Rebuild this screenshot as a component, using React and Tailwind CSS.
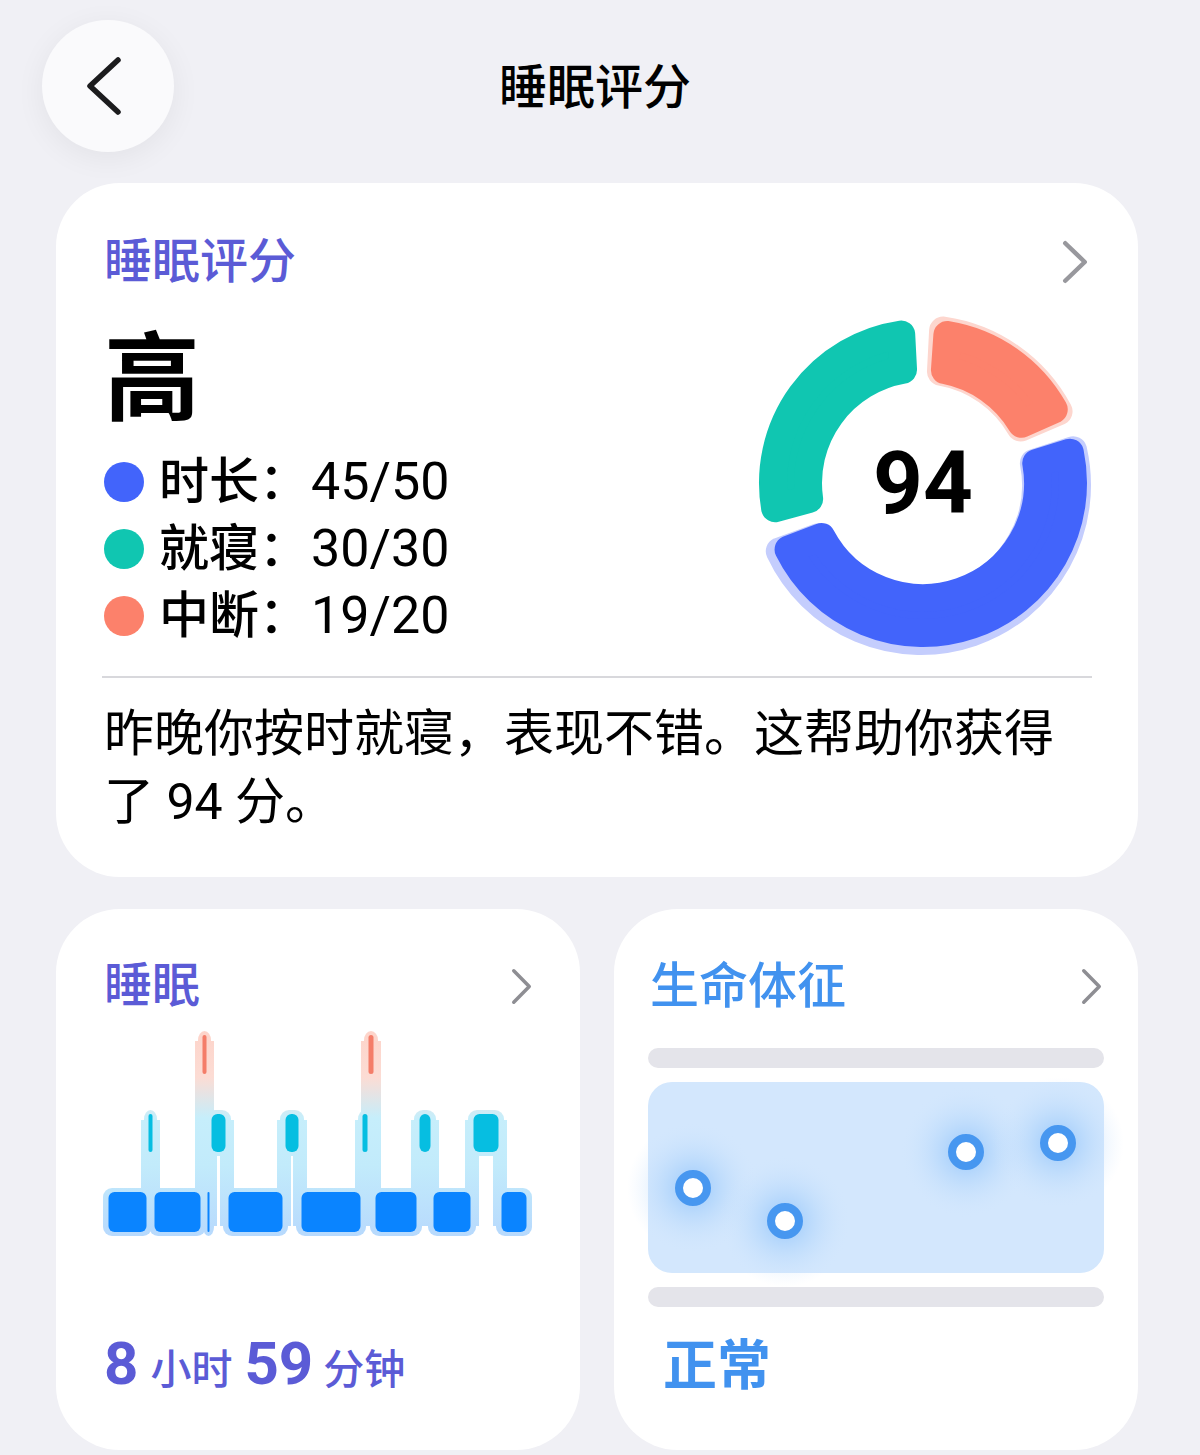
import React from "react";

const FONT = "font-['Roboto','Noto_Sans_CJK_SC',sans-serif]";

// ring segments, angles clockwise from 12 o'clock
const ring = [
  { a0: 255, a1: 357, color: "#10c6b1" },
  { a0: 4, a1: 66, color: "#fc816b", halo: "#fdd6ce" },
  { a0: 73, a1: 249, color: "#4264fb", halo: "#c4cdfd" },
];

function sector(cx, cy, a0, a1, ri, ro, r) {
  const rad = (a) => ((a - 90) * Math.PI) / 180;
  const pt = (a, R) => [cx + R * Math.cos(rad(a)), cy + R * Math.sin(rad(a))];
  const ro2 = ro - r;
  const ri2 = ri + r;
  const dOut = (Math.asin(r / ro2) * 180) / Math.PI;
  const dIn = (Math.asin(r / ri2) * 180) / Math.PI;
  const [x1, y1] = pt(a0 + dOut, ro2);
  const [x2, y2] = pt(a1 - dOut, ro2);
  const [x3, y3] = pt(a1 - dIn, ri2);
  const [x4, y4] = pt(a0 + dIn, ri2);
  const bigOut = a1 - a0 - 2 * dOut > 180 ? 1 : 0;
  const bigIn = a1 - a0 - 2 * dIn > 180 ? 1 : 0;
  return `M${x1} ${y1} A${ro2} ${ro2} 0 ${bigOut} 1 ${x2} ${y2} L${x3} ${y3} A${ri2} ${ri2} 0 ${bigIn} 0 ${x4} ${y4}Z`;
}

function ScoreRing() {
  return (
    <div className="relative w-[340px] h-[340px] -mt-[18px] -mr-[3px] shrink-0">
      <svg width="340" height="340" viewBox="0 0 340 340" className="overflow-visible">
        {ring.map((s, i) =>
          s.halo ? (
            <path
              key={"h" + i}
              d={sector(168, 172, s.a0 - 1, s.a1 + 1, 101, 170, 14)}
              fill={s.halo}
              stroke={s.halo}
              strokeWidth="28"
              strokeLinejoin="round"
            />
          ) : null
        )}
        {ring.map((s, i) => (
          <path
            key={i}
            d={sector(170, 170, s.a0, s.a1, 101, 164, 14)}
            fill={s.color}
            stroke={s.color}
            strokeWidth="28"
            strokeLinejoin="round"
          />
        ))}
      </svg>
      <div className="absolute inset-0 flex items-center justify-center">
        <span className="text-[87px] font-bold leading-none text-black">94</span>
      </div>
    </div>
  );
}

function Chevron({ w, h, color = "#8e8e93", stroke = 4 }) {
  return (
    <svg width={w} height={h} viewBox={`0 0 ${w} ${h}`} fill="none">
      <path
        d={`M${stroke / 2 + 1} ${stroke / 2 + 1} L${w - stroke / 2 - 1} ${h / 2} L${stroke / 2 + 1} ${h - stroke / 2 - 1}`}
        stroke={color}
        strokeWidth={stroke}
        strokeLinecap="round"
        strokeLinejoin="round"
      />
    </svg>
  );
}

// hypnogram: [stage, x0, x1]
const stages = [
  ["deep", 3, 44],
  ["light", 44, 49],
  ["deep", 49, 98],
  ["awake", 98, 103],
  ["deep", 103, 106],
  ["light", 106, 123],
  ["deep", 123, 180],
  ["light", 180, 196],
  ["deep", 196, 258],
  ["light", 258, 264],
  ["awake", 264, 270],
  ["deep", 270, 314],
  ["light", 314, 328],
  ["deep", 328, 368],
  ["light", 368, 396],
  ["deep", 396, 424],
];

const levels = {
  awake: { top: 3, bottom: 42, color: "#f47d69" },
  light: { top: 82, bottom: 120, color: "#06bee1" },
  deep: { top: 160, bottom: 200, color: "#0a84ff" },
};

function SleepChart() {
  const connectors = [];
  for (let i = 1; i < stages.length; i++) {
    const a = levels[stages[i - 1][0]];
    const b = levels[stages[i][0]];
    const x = stages[i][1];
    const top = Math.min(a.top, b.top) + 6;
    const bottom = Math.max(a.bottom, b.bottom) - 6;
    connectors.push({ x, top, bottom });
  }
  return (
    <svg width="428" height="205" viewBox="0 0 428 205" className="overflow-visible">
      <defs>
        <linearGradient id="halo" gradientUnits="userSpaceOnUse" x1="0" y1="0" x2="0" y2="205">
          <stop offset="0" stopColor="#fdd4ca" />
          <stop offset="0.22" stopColor="#fcdcd4" />
          <stop offset="0.42" stopColor="#c6eefb" />
          <stop offset="0.65" stopColor="#c2ebfb" />
          <stop offset="1" stopColor="#b7d9fd" />
        </linearGradient>
      </defs>
      {connectors.map((c, i) => (
        <rect key={"c" + i} x={c.x - 7} y={c.top} width="14" height={c.bottom - c.top} fill="url(#halo)" />
      ))}
      {stages.map(([s, x0, x1], i) => {
        const l = levels[s];
        return (
          <rect
            key={"h" + i}
            x={x0 - 4}
            y={l.top - 4}
            width={x1 - x0 + 8}
            height={l.bottom - l.top + 8}
            rx="9"
            fill="url(#halo)"
          />
        );
      })}
      {stages.map(([s, x0, x1], i) => {
        const l = levels[s];
        const w = x1 - x0;
        const inset = w > 8 ? 1.5 : 0.5;
        return (
          <rect
            key={i}
            x={x0 + inset}
            y={l.top}
            width={w - inset * 2}
            height={l.bottom - l.top}
            rx={w > 8 ? 6 : (w - inset * 2) / 2}
            fill={l.color}
          />
        );
      })}
    </svg>
  );
}

const points = [
  [45, 106],
  [137, 139],
  [318, 70],
  [410, 61],
];

function VitalsChart() {
  return (
    <div className="h-[191px] rounded-[24px] bg-[#d3e7fd]">
      <svg width="456" height="191" viewBox="0 0 456 191" className="overflow-visible">
        <defs>
          <radialGradient id="glow">
            <stop offset="0" stopColor="#8ec2fb" stopOpacity="0.9" />
            <stop offset="0.45" stopColor="#a9d1fb" stopOpacity="0.45" />
            <stop offset="1" stopColor="#d3e7fd" stopOpacity="0" />
          </radialGradient>
        </defs>
        {points.map(([x, y], i) => (
          <circle key={"g" + i} cx={x} cy={y} r="66" fill="url(#glow)" />
        ))}
        {points.map(([x, y], i) => (
          <circle key={i} cx={x} cy={y} r="14" fill="#ffffff" stroke="#4797f0" strokeWidth="8" />
        ))}
      </svg>
    </div>
  );
}

const legend = [
  { color: "#4264fb", label: "时长：", value: "45/50" },
  { color: "#10c6b1", label: "就寝：", value: "30/30" },
  { color: "#fc816b", label: "中断：", value: "19/20" },
];

export default function App() {
  return (
    <div className={`${FONT} h-[1455px] overflow-hidden bg-[#f0f0f5] text-black`}>
      {/* Header */}
      <div className="relative h-[152px] pt-[20px] px-[42px] flex items-start">
        <button className="w-[132px] h-[132px] rounded-full bg-[#fafafc] shadow-[0_6px_30px_rgba(0,0,0,0.06)] flex items-center justify-center">
          <svg width="40" height="60" viewBox="0 0 40 60" fill="none" className="-ml-[4px]">
            <path d="M32 4 L4 30 L32 56" stroke="#1c1c1e" strokeWidth="5.5" strokeLinecap="round" strokeLinejoin="round" />
          </svg>
        </button>
        <div className="absolute left-0 right-0 top-[64px] flex justify-center">
          <span className="text-[48px] leading-none font-medium ml-[-10px]">睡眠评分</span>
        </div>
      </div>

      {/* Score card */}
      <div className="ml-[56px] mr-[62px] mt-[31px] bg-white rounded-[64px] px-[48px] pt-[55px] pb-[41px]">
        <div className="flex items-center justify-between h-[48px]">
          <span className="text-[48px] leading-none font-medium text-[#5b5bd6]">睡眠评分</span>
          <div className="mr-[2px]">
            <Chevron w={26} h={44} stroke={4.5} color="#98989d" />
          </div>
        </div>

        <div className="flex justify-between items-start mt-[45px]">
          <div className="flex flex-col">
            <span className="text-[96px] leading-none font-bold">高</span>
            <div className="mt-[21px] flex flex-col">
              {legend.map((row) => (
                <div key={row.label} className="flex items-center h-[67px]">
                  <span className="w-[40px] h-[40px] rounded-full" style={{ backgroundColor: row.color }} />
                  <span className="ml-[15px] text-[50px] leading-none font-medium">{row.label}</span>
                  <span className="ml-[2px] text-[52px] leading-none">{row.value}</span>
                </div>
              ))}
            </div>
          </div>
          <ScoreRing />
        </div>

        <div className="mt-[23px] h-[2px] bg-[#d8d8dc] -mx-[2px]" />

        <p className="mt-[22px] text-[50px] leading-[68px]">
          昨晚你按时就寝，表现不错。这帮助你获得了 94 分。
        </p>
      </div>

      {/* Bottom cards */}
      <div className="ml-[56px] mr-[62px] mt-[32px] grid grid-cols-2 gap-[34px]">
        <div className="h-[541px] bg-white rounded-[64px] pl-[48px] pr-[48px] pt-[53px] flex flex-col">
          <div className="flex items-center justify-between h-[48px]">
            <span className="text-[48px] leading-none font-medium text-[#5b5bd6]">睡眠</span>
            <Chevron w={21} h={37} stroke={3.5} color="#8e8e93" />
          </div>
          <div className="mt-[22px]">
            <SleepChart />
          </div>
          <div className="mt-auto mb-[56px] flex items-baseline text-[#5b5bd6]">
            <span className="text-[60px] leading-none font-bold">8</span>
            <span className="ml-[12px] text-[41px] leading-none font-medium">小时</span>
            <span className="ml-[12px] text-[60px] leading-none font-bold">59</span>
            <span className="ml-[10px] text-[41px] leading-none font-medium">分钟</span>
          </div>
        </div>

        <div className="h-[541px] bg-white rounded-[64px] px-[34px] pt-[53px] flex flex-col">
          <div className="flex items-center justify-between h-[48px] pl-[2px] pr-[2px]">
            <span className="text-[49px] leading-none font-medium text-[#4192ef]">生命体征</span>
            <Chevron w={21} h={37} stroke={3.5} color="#8e8e93" />
          </div>
          <div className="mt-[38px] h-[20px] rounded-full bg-[#e4e4ea]" />
          <div className="mt-[14px]">
            <VitalsChart />
          </div>
          <div className="mt-[14px] h-[20px] rounded-full bg-[#e4e4ea]" />
          <span className="mt-[33px] ml-[15px] text-[54px] leading-none font-bold text-[#4192ef]">正常</span>
        </div>
      </div>
    </div>
  );
}
